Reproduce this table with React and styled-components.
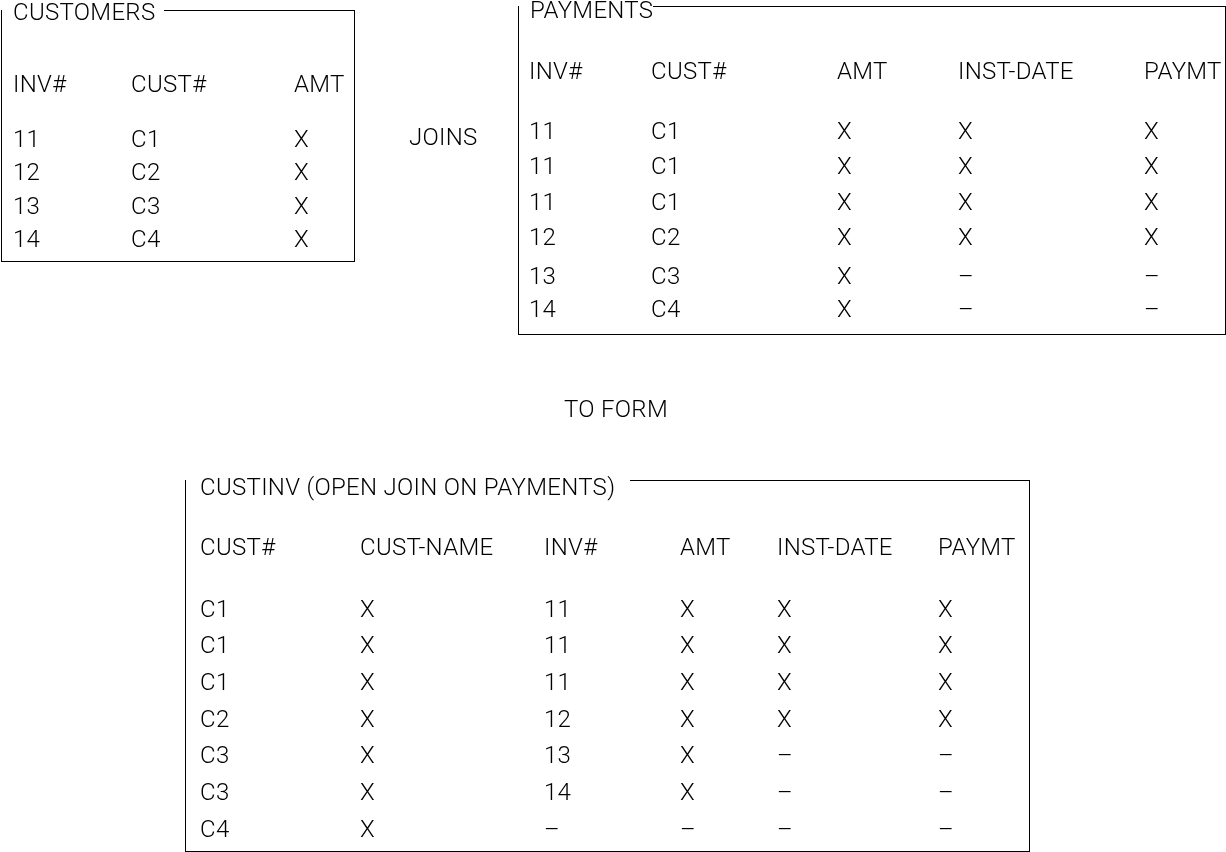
import React from "react";
import styled, { createGlobalStyle } from "styled-components";

const Global = createGlobalStyle`
  html, body { margin: 0; padding: 0; background: #fff; }
  body {
    font-family: Roboto, "Liberation Sans", Arial, sans-serif;
    font-weight: 300;
    color: #000;
  }
`;

const Page = styled.div`
  width: 1226px;
  height: 852px;
  overflow: hidden;
  display: flex;
  flex-direction: column;
  font-size: 24px;
  line-height: 24px;
  letter-spacing: 0.3px;
  will-change: transform;
`;

const TopRow = styled.div`
  display: flex;
  align-items: flex-start;
  padding-left: 1px;
  height: 334px;
`;

const Frame = styled.section`
  box-sizing: border-box;
  width: ${(p) => p.$w}px;
  height: ${(p) => p.$h}px;
  margin-top: ${(p) => p.$top}px;
  margin-left: ${(p) => (p.$auto ? "auto" : `${p.$left || 0}px`)};
  border: 1px solid #000;
  border-top: none;
  display: flex;
  flex-direction: column;
  padding-left: ${(p) => p.$pad}px;
`;

const TitleBar = styled.div`
  display: flex;
  align-items: flex-start;
  height: 1px;
  margin-left: -${(p) => p.$pad}px;
  margin-right: -1px;
`;

const Title = styled.span`
  white-space: nowrap;
  margin-top: ${(p) => p.$lift}px;
  padding-left: ${(p) => p.$pad}px;
  padding-right: ${(p) => p.$gap}px;
`;

const Rule = styled.div`
  flex: 1;
  border-top: 1px solid #000;
`;

const Row = styled.div`
  display: grid;
  grid-template-columns: ${(p) => p.$cols};
  height: ${(p) => p.$h}px;
  flex: none;
  white-space: nowrap;
`;

const Cell = styled.span`
  display: block;
  height: 24px;
`;

const Word = styled.div`
  white-space: nowrap;
  margin-top: ${(p) => p.$top}px;
  margin-left: ${(p) => p.$left || 0}px;
`;

const Spacer = styled.div`
  height: ${(p) => p.$h}px;
  flex: none;
`;

function Table({ cols, head, headTop, headH, rows, rowH }) {
  return (
    <>
      <Spacer $h={headTop} />
      <Row $cols={cols} $h={headH}>
        {head.map((c, i) => (
          <Cell key={i}>{c}</Cell>
        ))}
      </Row>
      {rows.map((r, i) => (
        <Row key={i} $cols={cols} $h={Array.isArray(rowH) ? rowH[i] : rowH}>
          {r.map((c, j) => (
            <Cell key={j}>{c}</Cell>
          ))}
        </Row>
      ))}
    </>
  );
}

const D = "\u2013";

export default function App() {
  return (
    <Page>
      <Global />
      <TopRow>
        <Frame $w={354} $h={252} $top={10} $pad={11}>
          <TitleBar $pad={11}>
            <Title $lift={-10} $pad={11} $gap={9}>CUSTOMERS</Title>
            <Rule />
          </TitleBar>
          <Table
            cols="118px 163px 1fr"
            head={["INV#", "CUST#", "AMT"]}
            headTop={61}
            headH={55}
            rowH={33.33}
            rows={[
              ["11", "C1", "X"],
              ["12", "C2", "X"],
              ["13", "C3", "X"],
              ["14", "C4", "X"],
            ]}
          />
        </Frame>
        <Word $top={125} $left={54}>JOINS</Word>
        <Frame $w={708} $h={329} $top={6} $auto $pad={10}>
          <TitleBar $pad={10}>
            <Title $lift={-8} $pad={11} $gap={0}>PAYMENTS</Title>
            <Rule />
          </TitleBar>
          <Table
            cols="122px 186px 121px 186px 1fr"
            head={["INV#", "CUST#", "AMT", "INST-DATE", "PAYMT"]}
            headTop={52}
            headH={60}
            rowH={[35, 36, 35, 39, 33, 36]}
            rows={[
              ["11", "C1", "X", "X", "X"],
              ["11", "C1", "X", "X", "X"],
              ["11", "C1", "X", "X", "X"],
              ["12", "C2", "X", "X", "X"],
              ["13", "C3", "X", D, D],
              ["14", "C4", "X", D, D],
            ]}
          />
        </Frame>
      </TopRow>
      <Word $top={63} $left={564}>TO FORM</Word>
      <Frame $w={845} $h={372} $top={59} $left={185} $pad={14}>
        <TitleBar $pad={14}>
          <Title $lift={-5} $pad={14} $gap={15}>CUSTINV (OPEN JOIN ON PAYMENTS)</Title>
          <Rule />
        </TitleBar>
        <Table
          cols="160px 184px 136px 97px 161px 1fr"
          head={["CUST#", "CUST-NAME", "INV#", "AMT", "INST-DATE", "PAYMT"]}
          headTop={54}
          headH={61.5}
          rowH={36.7}
          rows={[
            ["C1", "X", "11", "X", "X", "X"],
            ["C1", "X", "11", "X", "X", "X"],
            ["C1", "X", "11", "X", "X", "X"],
            ["C2", "X", "12", "X", "X", "X"],
            ["C3", "X", "13", "X", D, D],
            ["C3", "X", "14", "X", D, D],
            ["C4", "X", D, D, D, D],
          ]}
        />
      </Frame>
    </Page>
  );
}
